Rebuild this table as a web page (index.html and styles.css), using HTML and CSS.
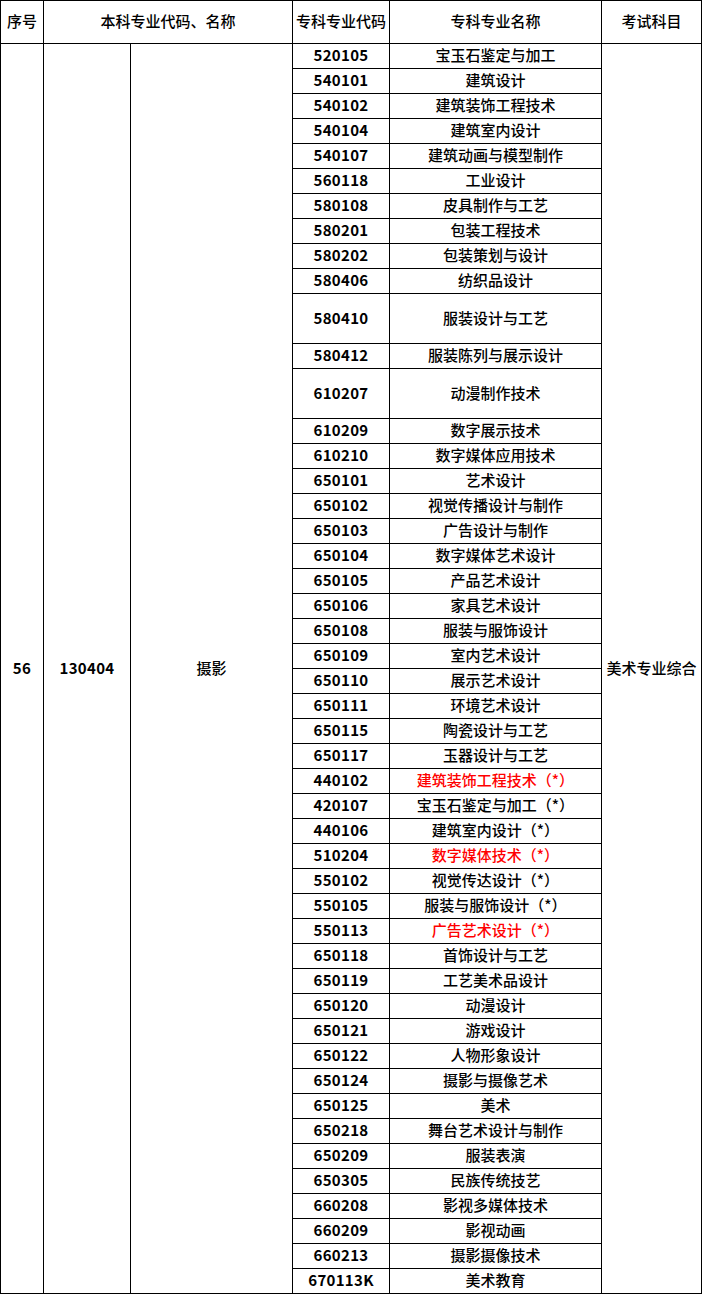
FILE: index.html
```html
<!DOCTYPE html>
<html lang="zh-CN">
<head>
<meta charset="utf-8">
<title>专业对照表</title>
<link rel="stylesheet" href="styles.css">
</head>
<body>
<div class="table">
  <div class="head">
    <div class="cell c1">序号</div>
    <div class="cell c23">本科专业代码、名称</div>
    <div class="cell c4">专科专业代码</div>
    <div class="cell c5">专科专业名称</div>
    <div class="cell c6">考试科目</div>
  </div>
  <div class="body">
    <div class="cell c1 num">56</div>
    <div class="cell c2 num">130404</div>
    <div class="cell c3">摄影</div>
    <div class="mid">
      <div class="row"><div class="cell c4 num">520105</div><div class="cell c5">宝玉石鉴定与加工</div></div>
      <div class="row"><div class="cell c4 num">540101</div><div class="cell c5">建筑设计</div></div>
      <div class="row"><div class="cell c4 num">540102</div><div class="cell c5">建筑装饰工程技术</div></div>
      <div class="row"><div class="cell c4 num">540104</div><div class="cell c5">建筑室内设计</div></div>
      <div class="row"><div class="cell c4 num">540107</div><div class="cell c5">建筑动画与模型制作</div></div>
      <div class="row"><div class="cell c4 num">560118</div><div class="cell c5">工业设计</div></div>
      <div class="row"><div class="cell c4 num">580108</div><div class="cell c5">皮具制作与工艺</div></div>
      <div class="row"><div class="cell c4 num">580201</div><div class="cell c5">包装工程技术</div></div>
      <div class="row"><div class="cell c4 num">580202</div><div class="cell c5">包装策划与设计</div></div>
      <div class="row"><div class="cell c4 num">580406</div><div class="cell c5">纺织品设计</div></div>
      <div class="row tall"><div class="cell c4 num">580410</div><div class="cell c5">服装设计与工艺</div></div>
      <div class="row"><div class="cell c4 num">580412</div><div class="cell c5">服装陈列与展示设计</div></div>
      <div class="row tall"><div class="cell c4 num">610207</div><div class="cell c5">动漫制作技术</div></div>
      <div class="row"><div class="cell c4 num">610209</div><div class="cell c5">数字展示技术</div></div>
      <div class="row"><div class="cell c4 num">610210</div><div class="cell c5">数字媒体应用技术</div></div>
      <div class="row"><div class="cell c4 num">650101</div><div class="cell c5">艺术设计</div></div>
      <div class="row"><div class="cell c4 num">650102</div><div class="cell c5">视觉传播设计与制作</div></div>
      <div class="row"><div class="cell c4 num">650103</div><div class="cell c5">广告设计与制作</div></div>
      <div class="row"><div class="cell c4 num">650104</div><div class="cell c5">数字媒体艺术设计</div></div>
      <div class="row"><div class="cell c4 num">650105</div><div class="cell c5">产品艺术设计</div></div>
      <div class="row"><div class="cell c4 num">650106</div><div class="cell c5">家具艺术设计</div></div>
      <div class="row"><div class="cell c4 num">650108</div><div class="cell c5">服装与服饰设计</div></div>
      <div class="row"><div class="cell c4 num">650109</div><div class="cell c5">室内艺术设计</div></div>
      <div class="row"><div class="cell c4 num">650110</div><div class="cell c5">展示艺术设计</div></div>
      <div class="row"><div class="cell c4 num">650111</div><div class="cell c5">环境艺术设计</div></div>
      <div class="row"><div class="cell c4 num">650115</div><div class="cell c5">陶瓷设计与工艺</div></div>
      <div class="row"><div class="cell c4 num">650117</div><div class="cell c5">玉器设计与工艺</div></div>
      <div class="row"><div class="cell c4 num">440102</div><div class="cell c5 red">建筑装饰工程技术（*）</div></div>
      <div class="row"><div class="cell c4 num">420107</div><div class="cell c5">宝玉石鉴定与加工（*）</div></div>
      <div class="row"><div class="cell c4 num">440106</div><div class="cell c5">建筑室内设计（*）</div></div>
      <div class="row"><div class="cell c4 num">510204</div><div class="cell c5 red">数字媒体技术（*）</div></div>
      <div class="row"><div class="cell c4 num">550102</div><div class="cell c5">视觉传达设计（*）</div></div>
      <div class="row"><div class="cell c4 num">550105</div><div class="cell c5">服装与服饰设计（*）</div></div>
      <div class="row"><div class="cell c4 num">550113</div><div class="cell c5 red">广告艺术设计（*）</div></div>
      <div class="row"><div class="cell c4 num">650118</div><div class="cell c5">首饰设计与工艺</div></div>
      <div class="row"><div class="cell c4 num">650119</div><div class="cell c5">工艺美术品设计</div></div>
      <div class="row"><div class="cell c4 num">650120</div><div class="cell c5">动漫设计</div></div>
      <div class="row"><div class="cell c4 num">650121</div><div class="cell c5">游戏设计</div></div>
      <div class="row"><div class="cell c4 num">650122</div><div class="cell c5">人物形象设计</div></div>
      <div class="row"><div class="cell c4 num">650124</div><div class="cell c5">摄影与摄像艺术</div></div>
      <div class="row"><div class="cell c4 num">650125</div><div class="cell c5">美术</div></div>
      <div class="row"><div class="cell c4 num">650218</div><div class="cell c5">舞台艺术设计与制作</div></div>
      <div class="row"><div class="cell c4 num">650209</div><div class="cell c5">服装表演</div></div>
      <div class="row"><div class="cell c4 num">650305</div><div class="cell c5">民族传统技艺</div></div>
      <div class="row"><div class="cell c4 num">660208</div><div class="cell c5">影视多媒体技术</div></div>
      <div class="row"><div class="cell c4 num">660209</div><div class="cell c5">影视动画</div></div>
      <div class="row"><div class="cell c4 num">660213</div><div class="cell c5">摄影摄像技术</div></div>
      <div class="row"><div class="cell c4 num">670113K</div><div class="cell c5">美术教育</div></div>
    </div>
    <div class="cell c6">美术专业综合</div>
  </div>
</div>
</body>
</html>
```

FILE: styles.css
```css
html, body {
  margin: 0;
  padding: 0;
  background: #ffffff;
}

body {
  font-family: "Noto Sans CJK SC", "Noto Sans", sans-serif;
  font-size: 15px;
  font-weight: 500;
  color: #000000;
  line-height: 1;
}

.table {
  width: 702px;
  box-sizing: border-box;
  border-left: 1px solid #000;
  border-top: 1px solid #000;
}

.head {
  display: flex;
  height: 43px;
}

.body {
  display: flex;
}

.cell {
  box-sizing: border-box;
  border-right: 1px solid #000;
  border-bottom: 1px solid #000;
  display: flex;
  align-items: center;
  justify-content: center;
  white-space: nowrap;
  padding-bottom: 3px;
}

.c1 { width: 43px; }
.c2 { width: 87px; }
.c3 { width: 162px; }
.c23 { width: 249px; }
.c4 { width: 97px; }
.c5 { width: 212px; }
.c6 { width: 100px; }

.mid {
  display: flex;
  flex-direction: column;
  width: 309px;
}

.row {
  display: flex;
  height: 25px;
}

.row.tall {
  height: 50px;
}

.row .cell {
  height: 100%;
}

.num {
  font-weight: 700;
  letter-spacing: 0.3px;
}

.red {
  color: #ff0000;
}
```
